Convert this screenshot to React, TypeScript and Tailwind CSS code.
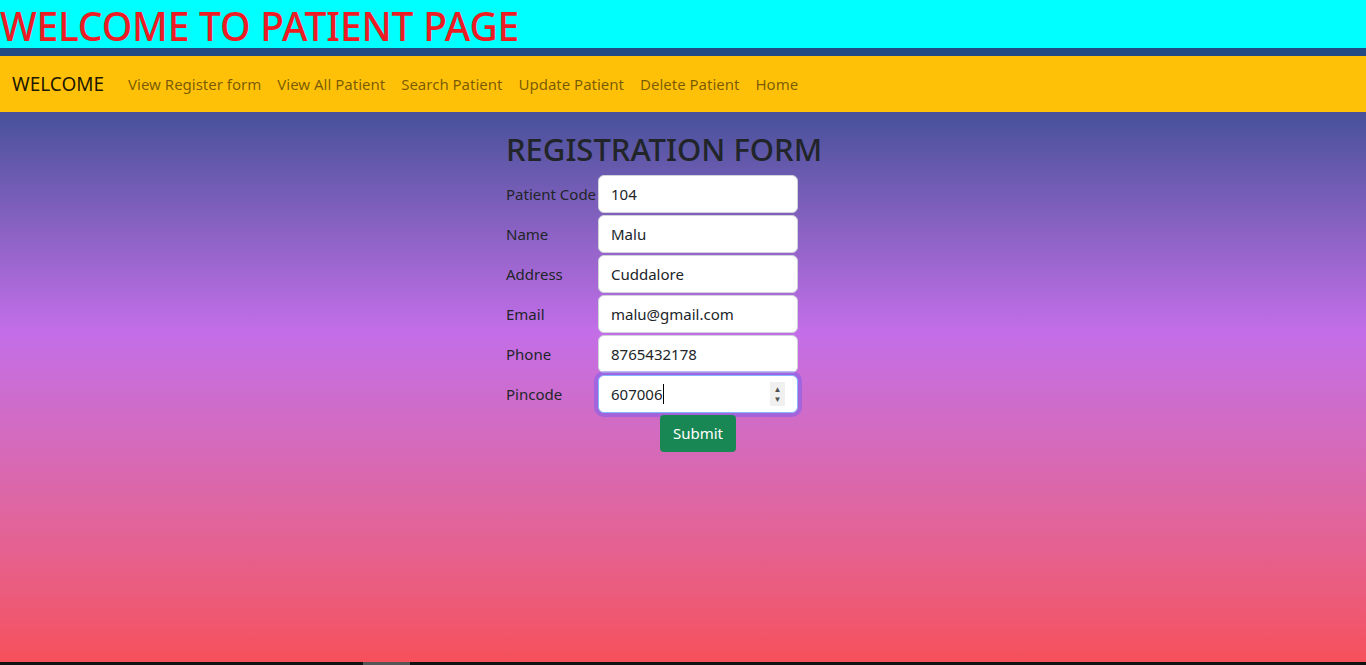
import React from 'react';

const fields = [
  { label: 'Patient Code', value: '104' },
  { label: 'Name', value: 'Malu' },
  { label: 'Address', value: 'Cuddalore' },
  { label: 'Email', value: 'malu@gmail.com' },
  { label: 'Phone', value: '8765432178' },
];

const links = ['View Register form', 'View All Patient', 'Search Patient', 'Update Patient', 'Delete Patient', 'Home'];

const App: React.FC = () => {
  return (
    <div className="flex h-[665px] flex-col overflow-hidden font-['Noto_Sans',sans-serif]">
      {/* Page title */}
      <div className="h-[48px] bg-[#00ffff]">
        <h1 className="text-[39px] leading-[52px] font-medium text-[#ed1c24] tracking-[-0.2px]">WELCOME TO PATIENT PAGE</h1>
      </div>
      <div className="h-[8px] bg-[#214b82]"></div>

      {/* Navbar */}
      <nav className="flex h-[56px] items-center bg-[#ffc107] px-3">
        <span className="mr-4 text-[19px] text-black/90">WELCOME</span>
        <div className="flex">
          {links.map((l) => (
            <a key={l} className="px-2 text-[15px] text-black/55">
              {l}
            </a>
          ))}
        </div>
      </nav>

      {/* Body */}
      <main className="flex-1 bg-gradient-to-b from-[#46519a] via-[#c36ee8] via-40% to-[#f6505a]">
        <div className="mx-auto w-[354px] pt-[18px]">
          <h2 className="mb-[6px] text-[31px] leading-[38px] font-medium text-[#212529]">REGISTRATION FORM</h2>
          <table className="border-collapse text-[15px] text-[#212529]">
            <tbody>
              {fields.map((f) => (
                <tr key={f.label} className="h-[40px]">
                  <td className="w-[92px] whitespace-nowrap p-0">{f.label}</td>
                  <td className="p-0">
                    <div className="flex h-[38px] w-[200px] items-center rounded-[6px] border border-[#ced4da] bg-white px-3">
                      {f.value}
                    </div>
                  </td>
                </tr>
              ))}
              <tr className="h-[40px]">
                <td className="p-0">Pincode</td>
                <td className="p-0">
                  <div className="flex h-[38px] w-[200px] items-center rounded-[6px] border border-[#86b7fe] bg-white pl-3 pr-3 shadow-[0_0_0_4px_rgba(110,90,240,0.45)]">
                    <span>607006</span>
                    <span className="ml-[1px] h-[20px] w-[1px] bg-black"></span>
                    <div className="ml-auto flex h-[24px] w-[15px] flex-col items-center justify-center bg-[#f0f0f0] text-[8px] leading-[10px] text-[#505050]">
                      <span>▲</span>
                      <span>▼</span>
                    </div>
                  </div>
                </td>
              </tr>
              <tr>
                <td></td>
                <td className="p-0 pt-[1px] text-center">
                  <button className="h-[37px] rounded-[4px] bg-[#198754] px-[13px] text-[15px] text-white">Submit</button>
                </td>
              </tr>
            </tbody>
          </table>
        </div>
      </main>
      <div className="flex h-[3px] bg-[#111]">
        <div className="ml-[363px] w-[47px] bg-[#555]"></div>
      </div>
    </div>
  );
};

export default App;
